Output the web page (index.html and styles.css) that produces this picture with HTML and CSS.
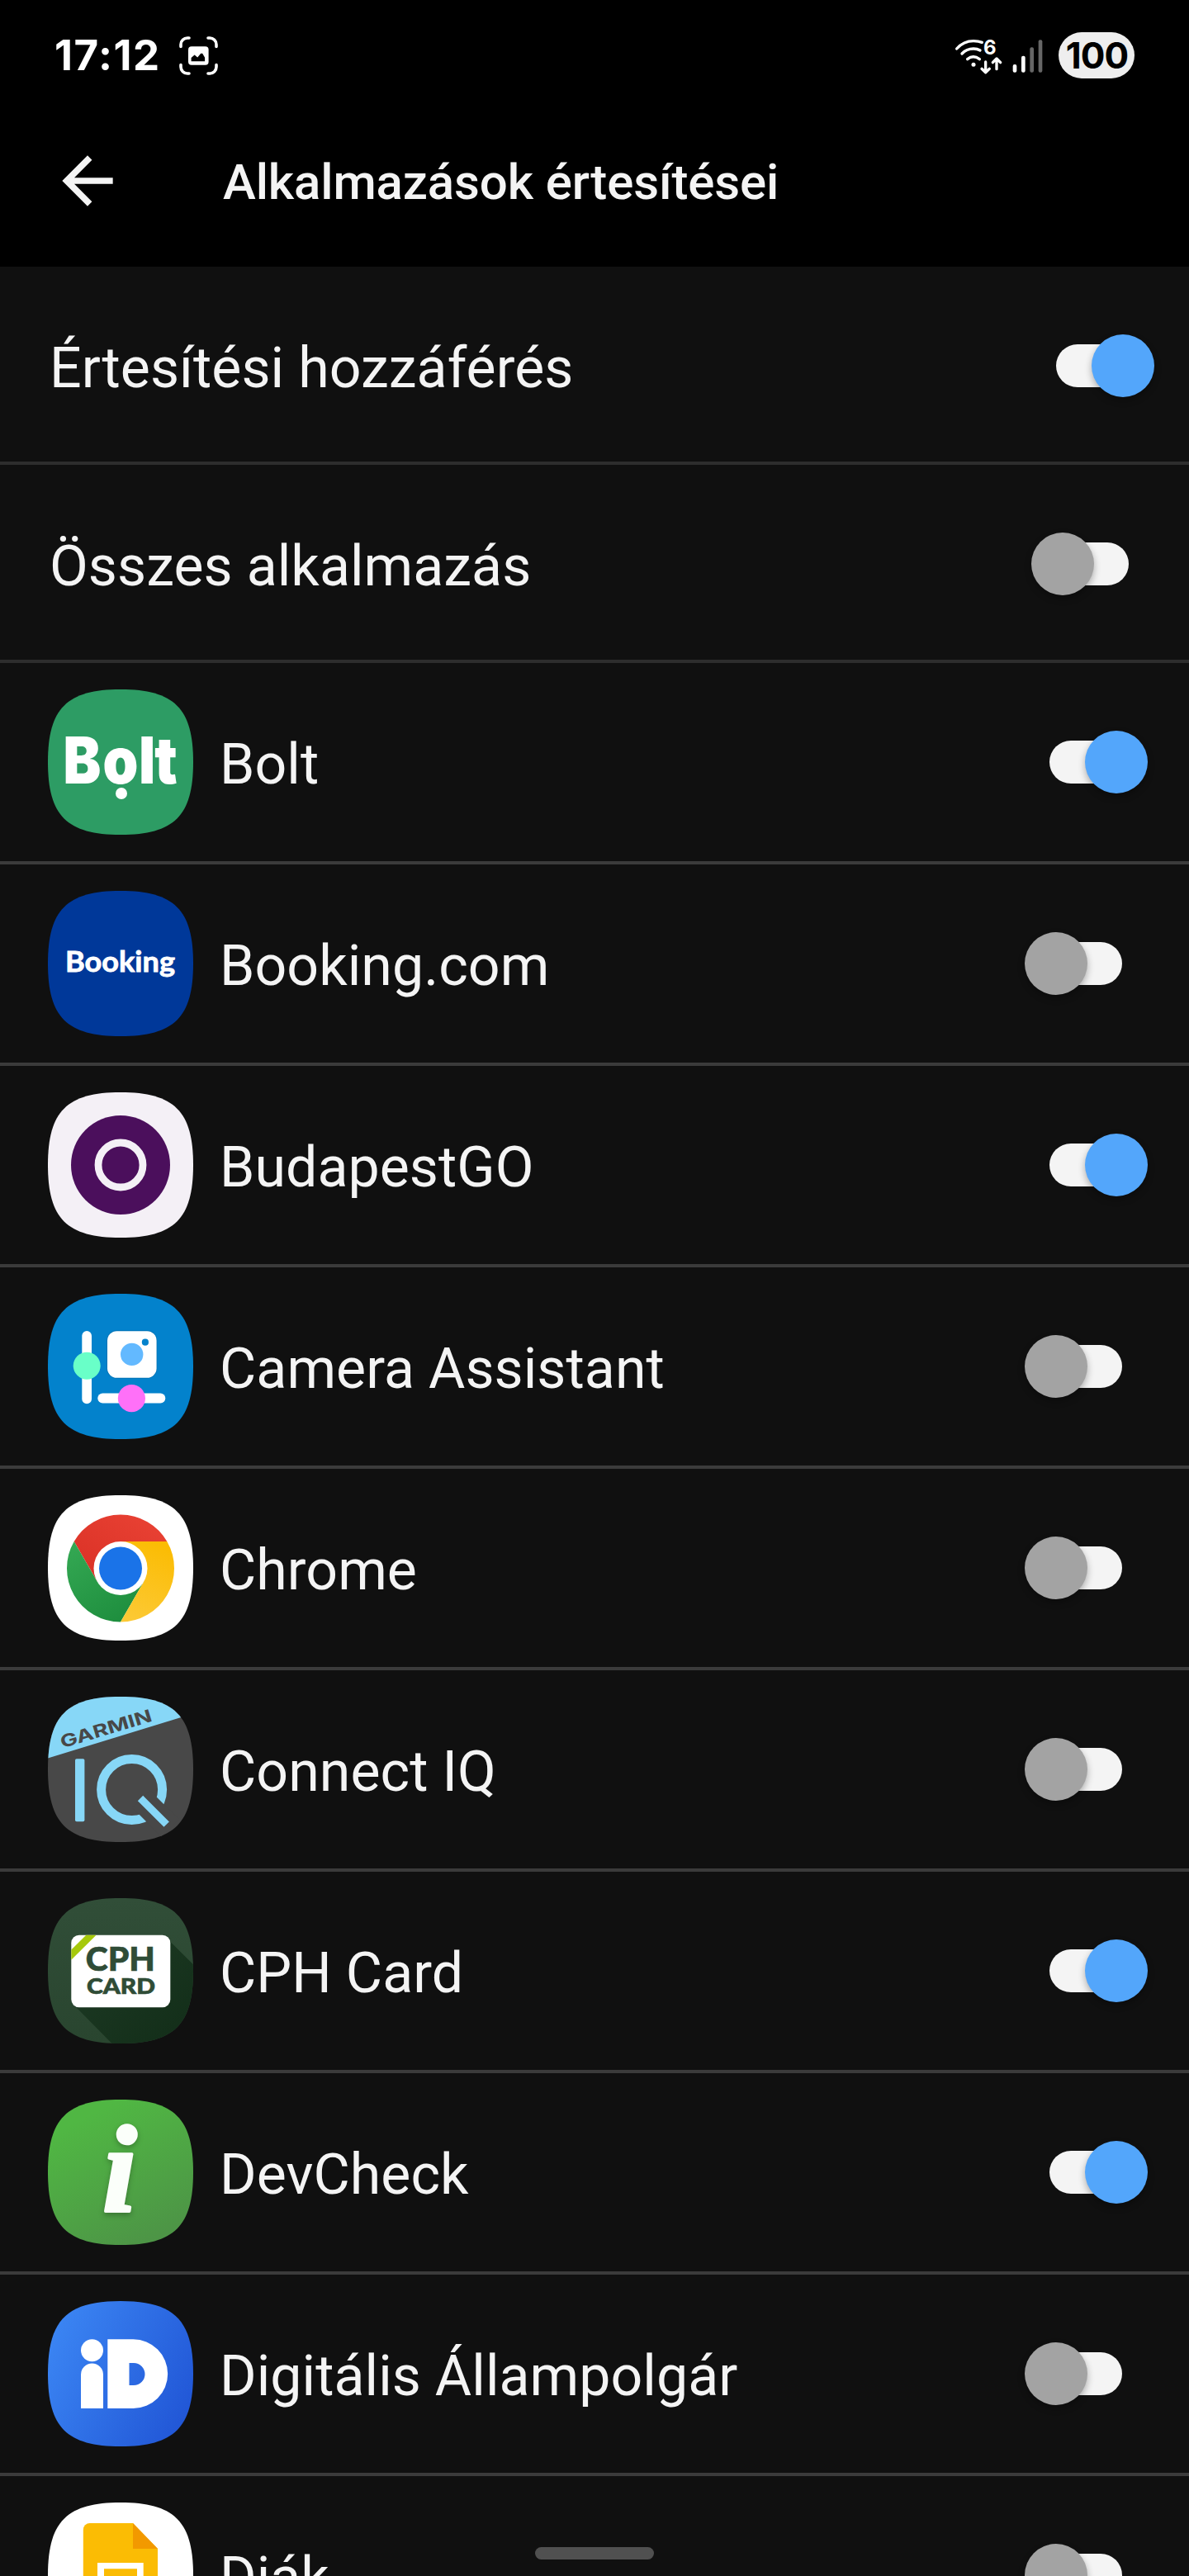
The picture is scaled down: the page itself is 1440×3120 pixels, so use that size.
FILE: index.html
```html
<!DOCTYPE html>
<html lang="hu">
<head>
<meta charset="utf-8">
<title>Alkalmazások értesítései</title>
<link rel="stylesheet" href="styles.css">
</head>
<body>
<svg class="defs" width="0" height="0" aria-hidden="true">
  <defs>
    <clipPath id="squircle"><path d="M88 0C153 0 176 23 176 88S153 176 88 176 0 153 0 88 23 0 88 0Z"/></clipPath>
  </defs>
</svg>
<div class="screen">
  <header class="header">
    <div class="status">
      <div class="status-side">
        <span class="clock">17:12</span>
        <svg class="shot" viewBox="0 0 47 47">
          <path d="M2 12.500V10A8 8 0 0 1 10 2h2M35 2h2a8 8 0 0 1 8 8v2.500M45 34.500V37a8 8 0 0 1-8 8h-2M12 45h-2a8 8 0 0 1-8-8v-2.500" fill="none" stroke="#fff" stroke-width="3.600" stroke-linecap="round"/>
          <rect x="11" y="12.300" width="24.600" height="22.400" rx="4" fill="#fff"/>
          <path d="M14.600 30.200V26l4-3.600 3.600 3 4-4.600h2l2.900 5v4.400z" fill="#000"/>
        </svg>
      </div>
      <div class="status-side">
        <svg class="signal" viewBox="168 130 324 141">
          <g fill="none" stroke="#fff" stroke-width="10" stroke-linecap="round" stroke-linejoin="round">
            <path d="M176 175Q201 147 237 147Q255 147 268 152M195 193Q212 175 237 175Q251 175 261 181M215 213Q236 196 259 213"/>
            <path d="M281 223V259M267 248L281 261L295 248M321 249V213M307 225L321 211L335 225"/>
          </g>
          <circle cx="237" cy="233" r="7.500" fill="#fff"/>
          <text class="wifi-gen" x="273" y="195">6</text>
          <rect x="380" y="232" width="14" height="29" rx="6" fill="#fff"/>
          <rect x="411" y="201" width="14" height="60" rx="6" fill="#fff"/>
          <rect x="442" y="170" width="14" height="91" rx="6" fill="#666"/>
          <rect x="473" y="143" width="14" height="118" rx="6" fill="#666"/>
        </svg>
        <span class="battery">100</span>
      </div>
    </div>
    <div class="toolbar">
      <svg class="back" viewBox="0 0 24 24"><path d="M20 11H7.830l5.590-5.590L12 4l-8 8 8 8 1.410-1.410L7.830 13H20z" fill="#f4f4f4"/></svg>
      <h1 class="title">Alkalmazások értesítései</h1>
    </div>
  </header>

  <main>
    <div class="row row-main"><span class="label">Értesítési hozzáférés</span><span class="switch on"></span></div>
    <div class="row row-main"><span class="label">Összes alkalmazás</span><span class="switch"></span></div>

    <div class="row">
      <svg class="icon" viewBox="0 0 176 176"><g clip-path="url(#squircle)">
        <rect width="176" height="176" fill="#2d9c64"/>
        <text class="bolt-text" transform="scale(.88 1)" y="114" x="21 75.500 125 147">Bolt</text>
        <circle cx="89" cy="126" r="7" fill="#fff"/>
      </g></svg>
      <span class="label">Bolt</span><span class="switch on"></span>
    </div>

    <div class="row">
      <svg class="icon" viewBox="0 0 176 176"><g clip-path="url(#squircle)">
        <rect width="176" height="176" fill="#003899"/>
        <text class="booking-text" x="21" y="97.500" textLength="133" lengthAdjust="spacingAndGlyphs">Booking</text>
      </g></svg>
      <span class="label">Booking.com</span><span class="switch"></span>
    </div>

    <div class="row">
      <svg class="icon" viewBox="0 0 176 176"><g clip-path="url(#squircle)">
        <rect width="176" height="176" fill="#f4f0f6"/>
        <circle cx="88" cy="88" r="60" fill="#4b0f5c"/>
        <circle cx="88" cy="88" r="27" fill="none" stroke="#f4f0f6" stroke-width="8.800"/>
      </g></svg>
      <span class="label">BudapestGO</span><span class="switch on"></span>
    </div>

    <div class="row">
      <svg class="icon" viewBox="0 0 176 176"><g clip-path="url(#squircle)">
        <rect width="176" height="176" fill="#0382cc"/>
        <rect x="41.300" y="45" width="11.700" height="88.300" rx="5.850" fill="#fff"/>
        <circle cx="47.200" cy="87.200" r="16.500" fill="#69ffc8"/>
        <rect x="60.300" y="120.600" width="82" height="12" rx="6" fill="#fff"/>
        <circle cx="101.400" cy="126.600" r="16.600" fill="#ff70f8"/>
        <rect x="71" y="44.300" width="61.400" height="58.400" rx="12.500" fill="#0373b5"/>
        <rect x="72" y="45.200" width="59.600" height="56.600" rx="11.500" fill="#fff"/>
        <circle cx="101.700" cy="73.400" r="13.700" fill="#63b9ff"/>
        <circle cx="117.900" cy="58.700" r="4.100" fill="#0382cc"/>
      </g></svg>
      <span class="label">Camera Assistant</span><span class="switch"></span>
    </div>

    <div class="row">
      <svg class="icon" viewBox="0 0 176 176">
        <defs>
          <linearGradient id="cr" x1="0" y1="1" x2="1" y2="0"><stop offset="0" stop-color="#d93025"/><stop offset="1" stop-color="#ea4335"/></linearGradient>
          <linearGradient id="cg" x1=".7" y1="1" x2=".1" y2="0"><stop offset="0" stop-color="#1e8e3e"/><stop offset="1" stop-color="#34a853"/></linearGradient>
          <linearGradient id="cy" x1=".3" y1="1" x2=".6" y2="0"><stop offset="0" stop-color="#fcc934"/><stop offset="1" stop-color="#fbbc04"/></linearGradient>
        </defs>
        <g clip-path="url(#squircle)">
        <rect width="176" height="176" fill="#fff"/>
        <path d="M31.700 56A65 65 0 0 1 144.300 56H88v32.500L59.900 104.700z" fill="url(#cr)"/>
        <path d="M31.700 56A65 65 0 0 0 88 153.500l28.100-48.800L88 88.500 59.900 104.700z" fill="url(#cg)"/>
        <path d="M144.300 56A65 65 0 0 1 88 153.500l28.100-48.800L88 88.500V56z" fill="url(#cy)"/>
        <circle cx="88" cy="88.500" r="32.500" fill="#fff"/>
        <circle cx="88" cy="88.500" r="26" fill="#1a73e8"/>
      </g></svg>
      <span class="label">Chrome</span><span class="switch"></span>
    </div>

    <div class="row">
      <svg class="icon" viewBox="0 0 176 176"><g clip-path="url(#squircle)">
        <rect width="176" height="176" fill="#484848"/>
        <path d="M0 74.500L176 20.600V0H0z" fill="#87d7f7"/>
        <text class="garmin-text" transform="translate(17.500 62.500) rotate(-16.800)" textLength="115" lengthAdjust="spacingAndGlyphs">GARMIN</text>
        <rect x="33" y="75.300" width="11.400" height="76" rx="1.800" fill="#87d7f7"/>
        <circle cx="101.600" cy="112.500" r="37" fill="none" stroke="#87d7f7" stroke-width="11"/>
        <path d="M113 124L148 159" stroke="#484848" stroke-width="30"/>
        <path d="M115.200 126.200L140.500 151.500" stroke="#87d7f7" stroke-width="9" stroke-linecap="square"/>
      </g></svg>
      <span class="label">Connect IQ</span><span class="switch"></span>
    </div>

    <div class="row">
      <svg class="icon" viewBox="0 0 176 176">
        <defs>
          <linearGradient id="pb" x1="0" y1="0" x2="0" y2="1"><stop offset="0" stop-color="#314e38"/><stop offset="1" stop-color="#29452f"/></linearGradient>
          <linearGradient id="ps" x1="0" y1="0" x2="1" y2="1"><stop offset="0" stop-color="#1e3b25"/><stop offset="1" stop-color="#122d18"/></linearGradient>
        </defs>
        <g clip-path="url(#squircle)">
        <rect width="176" height="176" fill="url(#pb)"/>
        <path d="M147 51.600L176 80.300V176H77.500L33 131 90 70z" fill="url(#ps)"/>
        <rect x="28.300" y="44.700" width="120" height="87.600" rx="9.500" fill="#fff"/>
        <path d="M46.300 44.700H58.500L28.300 74.700V62.500z" fill="#a6c90b"/>
        <text class="cph-text" x="45.800" y="87.800" font-size="40" textLength="84" lengthAdjust="spacingAndGlyphs">CPH</text>
        <text class="cph-text" x="47" y="116.400" font-size="27" textLength="83" lengthAdjust="spacingAndGlyphs">CARD</text>
      </g></svg>
      <span class="label">CPH Card</span><span class="switch on"></span>
    </div>

    <div class="row">
      <svg class="icon" viewBox="0 0 176 176">
        <defs><linearGradient id="dc" x1=".25" y1="0" x2=".75" y2="1"><stop offset=".1" stop-color="#50b743"/><stop offset=".95" stop-color="#4d9546"/></linearGradient></defs>
        <g clip-path="url(#squircle)">
        <rect width="176" height="176" fill="url(#dc)"/>
        <text class="info-text" x="66" y="136">i</text>
      </g></svg>
      <span class="label">DevCheck</span><span class="switch on"></span>
    </div>

    <div class="row">
      <svg class="icon" viewBox="0 0 176 176">
        <defs><linearGradient id="id" x1="0" y1=".25" x2="1" y2=".75"><stop offset="0" stop-color="#3b85f3"/><stop offset="1" stop-color="#2156d6"/></linearGradient></defs>
        <g clip-path="url(#squircle)">
        <rect width="176" height="176" fill="url(#id)"/>
        <circle cx="53.500" cy="59.800" r="13.500" fill="#fff"/>
        <path d="M40 130V89a13.500 13.500 0 0 1 27 0v41z" fill="#fff"/>
        <path fill-rule="evenodd" d="M72.300 46.300H103.300a41.850 41.850 0 0 1 0 83.700H72.300zM98.500 75v27h5.500a13.500 13.500 0 0 0 0-27z" fill="#fff"/>
      </g></svg>
      <span class="label">Digitális Állampolgár</span><span class="switch"></span>
    </div>

    <div class="row">
      <svg class="icon" viewBox="0 0 176 176"><g clip-path="url(#squircle)">
        <rect width="176" height="176" fill="#fff"/>
        <path d="M50.800 25H103l30 31v87a8 8 0 0 1-8 8H50.800a8 8 0 0 1-8-8V33a8 8 0 0 1 8-8z" fill="#fbbc04"/>
        <path d="M103 25l30 31H103z" fill="#f29900"/>
        <path fill-rule="evenodd" d="M60 73h55.700v45H60zM68 80.300v30.400h40V80.300z" fill="#fff"/>
      </g></svg>
      <span class="label">Diák</span><span class="switch"></span>
    </div>
  </main>
  <div class="home-bar"></div>
</div>
</body>
</html>
```

FILE: styles.css
```css
* { box-sizing: border-box; }

body {
  margin: 0;
  background: #101010;
  font-family: Roboto, "Liberation Sans", sans-serif;
}

.defs { position: absolute; }

.screen {
  position: relative;
  width: 1440px;
  height: 3120px;
  overflow: hidden;
  background: #101010;
  color: #f4f4f4;
}

.header {
  height: 323px;
  background: #000;
}

.status {
  display: flex;
  justify-content: space-between;
  align-items: center;
  height: 134px;
  padding: 0 66px;
}

.status-side {
  display: flex;
  align-items: center;
}

.clock {
  width: 151px;
  font: 700 51px/60px Inter, sans-serif;
  letter-spacing: 1.5px;
  color: #fff;
}

.shot { width: 47px; height: 47px; }

.signal {
  width: 108px;
  height: 47px;
  margin-right: 18px;
}

.wifi-gen {
  font: 700 72px Inter, sans-serif;
  fill: #fff;
}

.battery {
  width: 92px;
  height: 56px;
  padding-left: 1px;
  border-radius: 28px;
  background: #eee;
  color: #000;
  font: 700 44px/56px Inter, sans-serif;
  letter-spacing: -1px;
  text-align: center;
}

.toolbar {
  display: flex;
  align-items: center;
  height: 169px;
  padding-left: 60px;
}

.back { width: 92px; height: 92px; }

.title {
  margin: 4px 0 0 118px;
  font-size: 60px;
  font-weight: 500;
  line-height: 72px;
  letter-spacing: -0.12px;
  white-space: nowrap;
}

.row {
  display: flex;
  align-items: center;
  height: 244px;
  padding: 0 81px 0 58px;
  border-bottom: 4px solid #3b3b3b;
}

.row-main {
  height: 240px;
  padding: 4px 73px 0 60px;
  border-bottom-color: #2d2d2d;
}

.icon {
  flex: none;
  width: 176px;
  height: 176px;
  margin-right: 32px;
}

.label {
  flex: 1;
  padding-top: 6px;
  font-size: 68px;
  line-height: 80px;
  letter-spacing: 0.07px;
  white-space: nowrap;
}

.switch {
  position: relative;
  width: 88px;
  height: 52px;
  border-radius: 26px;
  background: #f4f4f4;
}

.switch::after {
  content: "";
  position: absolute;
  top: -12px;
  left: -30px;
  width: 76px;
  height: 76px;
  border-radius: 50%;
  background: #a3a3a3;
  box-shadow: 0 4px 8px rgba(0, 0, 0, 0.3);
}

.switch.on::after {
  left: 43px;
  background: #53a6fb;
}

.bolt-text {
  font: 900 78px Inter, sans-serif;
  fill: #fff;
}

.booking-text {
  font: 700 35px Lato, sans-serif;
  fill: #fff;
  stroke: #fff;
  stroke-width: 0.8px;
}

.garmin-text {
  font: 700 21px Inter, sans-serif;
  fill: #484848;
}

.cph-text {
  font-family: Lato, sans-serif;
  font-weight: 900;
  fill: #2f4c36;
  stroke: #2f4c36;
  stroke-width: 0.7px;
}

.info-text {
  font: italic 700 150px "Liberation Serif", serif;
  fill: #fbfffa;
  stroke: #fbfffa;
  stroke-width: 3.5px;
  stroke-linejoin: round;
  filter: drop-shadow(0 3px 3px rgba(0, 0, 0, 0.25));
}

.home-bar {
  position: absolute;
  left: 648px;
  top: 3085px;
  width: 144px;
  height: 15px;
  border-radius: 8px;
  background: #505050;
}
```
